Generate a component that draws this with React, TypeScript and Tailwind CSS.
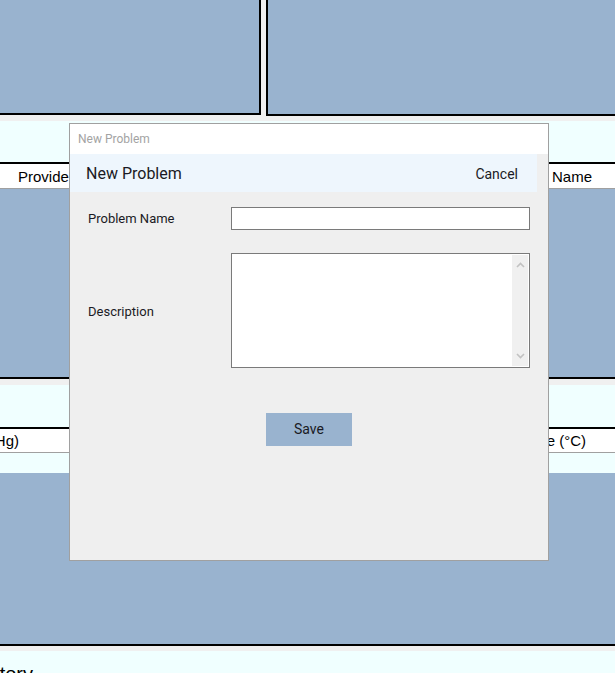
import React from "react";

const rowFont = { fontFamily: '"Liberation Sans", Arial, sans-serif' };
const dlgFont = { fontFamily: 'Roboto, "Noto Sans", sans-serif' };

function Chevron({ up }: { up?: boolean }) {
  return (
    <svg width="9" height="6" viewBox="0 0 9 6" className="block">
      <path
        d={up ? "M1 5 L4.5 1.5 L8 5" : "M1 1 L4.5 4.5 L8 1"}
        fill="none"
        stroke="#c2c2c2"
        strokeWidth="1.6"
      />
    </svg>
  );
}

function NewProblemDialog() {
  return (
    <div
      className="absolute left-[69px] top-[123px] w-[480px] h-[438px] border border-[#a0a0a0] bg-[#efefef] flex flex-col"
      style={dlgFont}
    >
      <div className="h-[30px] bg-white flex items-center pl-[8px] text-[12px] text-[#a3a3a3]">
        New Problem
      </div>
      <div className="h-[38px] w-[467px] bg-[#eef6fd] flex items-center justify-between pl-[16px] pr-[19px] pt-[2px]">
        <span className="text-[16px] text-[#1a1a24]">New Problem</span>
        <span className="text-[14px] text-[#1a1a24]">Cancel</span>
      </div>

      <div className="flex flex-col pt-[15px] pl-[18px]">
        <div className="flex items-center h-[23px]">
          <label className="w-[143px] text-[13px] text-[#1a1a24] pt-[1px]">Problem Name</label>
          <input
            type="text"
            className="w-[299px] h-[23px] bg-white border border-[#7a7a7a] outline-none"
          />
        </div>

        <div className="flex items-center mt-[23px]">
          <label className="w-[143px] text-[13px] text-[#1a1a24] pt-[3px]">Description</label>
          <div className="w-[299px] h-[115px] bg-white border border-[#7a7a7a] flex justify-end p-[1px]">
            <div className="w-[16px] bg-[#f0f0f0] flex flex-col items-center justify-between py-[7px]">
              <Chevron up />
              <Chevron />
            </div>
          </div>
        </div>

        <div className="flex mt-[45px] pl-[178px]">
          <button className="w-[86px] h-[33px] bg-[#99b3cf] text-[14px] text-[#1a1a24]">
            Save
          </button>
        </div>
      </div>
    </div>
  );
}

export default function App() {
  return (
    <div className="relative w-[615px] h-[673px] overflow-hidden bg-[#f0f0f0]" style={rowFont}>
      {/* top panels */}
      <div className="flex h-[116px]">
        <div className="w-[261px] h-[115px] bg-[#99b3cf] border-r-2 border-b-2 border-black" />
        <div className="ml-[5px] flex-1 h-[116px] bg-[#99b3cf] border-l-2 border-b-2 border-black" />
      </div>

      {/* providers section */}
      <div className="mt-[5px] h-[41px] bg-[#f0ffff]" />
      <div className="h-[27px] bg-white border-t-2 border-black border-b border-b-[#a0a0a0] flex items-center justify-between pl-[18px] pr-[23px] pt-[3px] text-[15px] text-black whitespace-nowrap">
        <span>Provider</span>
        <span>Name</span>
      </div>
      <div className="h-[190px] bg-[#99b3cf] border-b-2 border-black" />

      {/* vitals section */}
      <div className="mt-[6px] h-[42px] bg-[#f0ffff]" />
      <div className="h-[26px] bg-white border-t-2 border-black border-b border-b-[#a0a0a0] flex items-center justify-between pr-[29px] pt-[2px] text-[15px] text-black whitespace-nowrap">
        <div className="w-[19px] flex justify-end">
          <span>Blood Pressure (mmHg)</span>
        </div>
        <span>Temperature (°C)</span>
      </div>
      <div className="h-[20px] bg-[#f0ffff]" />
      <div className="h-[173px] bg-[#99b3cf] border-b-2 border-black" />

      {/* history section */}
      <div className="mt-[5px] h-[40px] bg-[#f0ffff] pt-[8px] whitespace-nowrap">
        <div className="w-[33px] flex justify-end text-[20px] text-black">
          <span>History</span>
        </div>
      </div>

      <NewProblemDialog />
    </div>
  );
}
